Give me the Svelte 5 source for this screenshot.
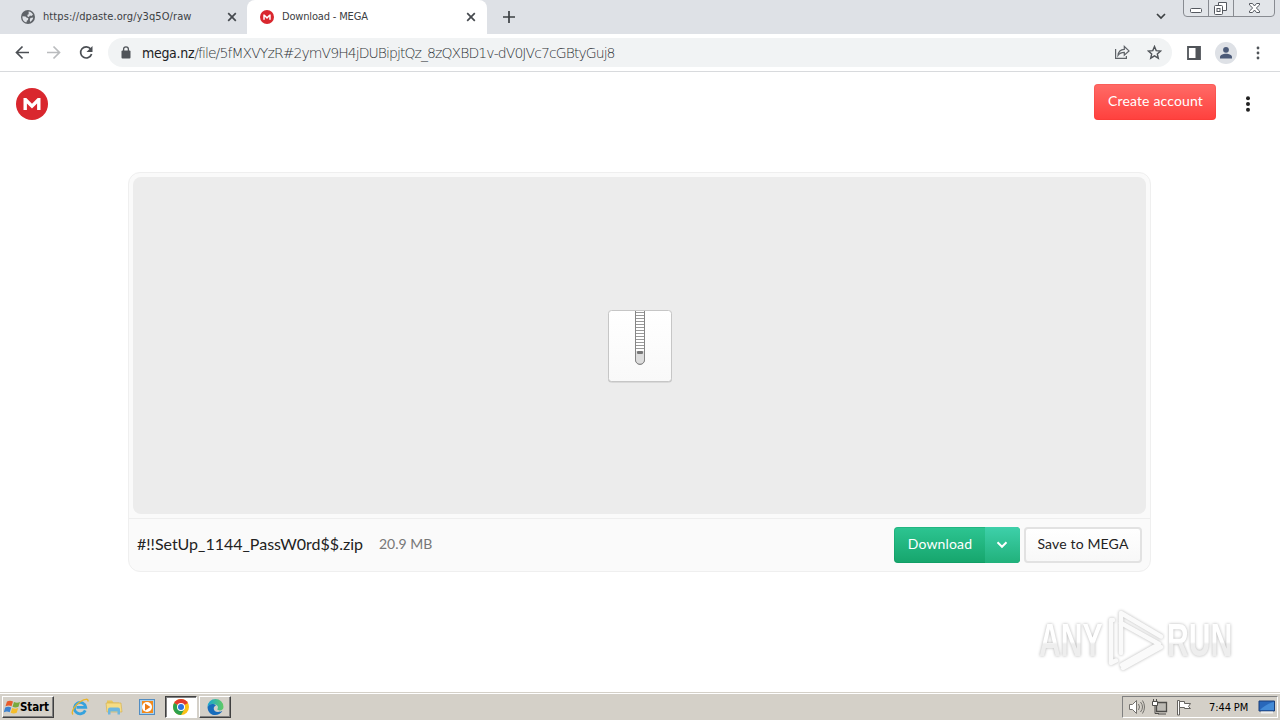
<script lang="ts">
  let url = $state({ host: 'mega.nz', path: '/file/5fMXVYzR#2ymV9H4jDUBipjtQz_8zQXBD1v-dV0JVc7cGBtyGuj8' })
  let file = $state({ name: '#!!SetUp_1144_PassW0rd$$.zip', size: '20.9 MB' })
  const teeth = Array.from({ length: 13 }, (_, i) => 3.5 + i * 3)
</script>

{#snippet mega(size: number)}
  <svg width={size} height={size} viewBox="0 0 32 32">
    <circle cx="16" cy="16" r="16" fill="#d9272e" />
    <path d="M7.500 22V10h2.800l5.700 5.700 5.700-5.700h2.800v12h-3.400v-6.400L16 20.400l-5.100-4.800V22z" fill="#fff" />
  </svg>
{/snippet}

{#snippet cross()}
  <svg class="cross" width="10" height="10" viewBox="0 0 10 10">
    <path d="M1.2 1.2l7.6 7.6M8.8 1.2L1.2 8.8" stroke="#45494e" stroke-width="1.7" />
  </svg>
{/snippet}

<div class="screen">
  <div class="tabs">
    <div class="tab first">
      <svg width="14" height="14" viewBox="0 0 14 14">
        <circle cx="7" cy="7" r="7" fill="#5f6368" />
        <path d="M1.5 6.2l3 .3 1.3 1.3 1.5.3-.3 1.8-1.2.8-.2 1.6C3 12 1 9.4 1.5 6.2zM7.6 1.5c2 .2 3.6 1.4 4.4 3.2L10.3 6 9 5.5 7.8 7l-1.5-.8.2-1.5 1.2-.5zM9.4 8l2.8-.4c-.3 2-1.4 3.4-3 4.3l-.4-2z" fill="#dee1e6" />
      </svg>
      <span class="title t1">https://dpaste.org/y3q5O/raw</span>
      {@render cross()}
    </div>
    <div class="tab active">
      {@render mega(14)}
      <span class="title t2">Download - MEGA</span>
      {@render cross()}
    </div>
    <svg class="plus" width="12" height="12" viewBox="0 0 12 12"><path d="M6 0v12M0 6h12" stroke="#3c4043" stroke-width="1.7" /></svg>
    <svg class="chev" width="10" height="7" viewBox="0 0 10 7"><path d="M1 1l4 4 4-4" fill="none" stroke="#3c4043" stroke-width="1.7" /></svg>
    <div class="window-buttons">
      <svg width="92" height="17" viewBox="0 0 92 17" fill="none">
        <path d="M.5 0v13q0 3.500 3.500 3.500h84q3.500 0 3.500-3.500V0" fill="#e2e5e9" stroke="#888b91" />
        <path d="M25.500 0v16M50.500 0v16" stroke="#888b91" />
        <rect x="7.500" y="8.500" width="11" height="4" rx="1" fill="#fff" stroke="#555960" />
        <path d="M35.500 2.500h8v8h-8z" fill="#fff" stroke="#555960" />
        <rect x="31.500" y="5.500" width="8" height="9" rx="1" fill="#fff" stroke="#555960" />
        <rect x="34" y="8.500" width="3" height="3" stroke="#555960" />
        <path d="M66.500 3.500h3l2 2.500 2-2.500h3v1.500L73.300 8l3.200 3v1.500h-3l-2-2.500-2 2.500h-3V11l3.200-3-3.200-3z" fill="#fff" stroke="#555960" />
      </svg>
    </div>
  </div>

  <div class="toolbar">
    <svg class="nav" width="96" height="16" viewBox="0 0 96 16" fill="none" stroke-width="1.7">
      <path d="M15 7.500H2.500M8.500 1.500l-6 6 6 6" stroke="#4b4f54" />
      <path d="M33 7.500H45.500M39.500 1.500l6 6-6 6" stroke="#babcbe" />
      <path d="M76.700 4A5.600 5.600 0 1 0 77.600 9" stroke="#4b4f54" />
      <path d="M78.500 1v6h-6z" fill="#4b4f54" />
    </svg>
    <div class="address">
      <svg class="lock" width="10" height="13" viewBox="0 0 10 13">
        <rect x=".5" y="4.500" width="9" height="8" rx="1" fill="#505459" />
        <path d="M2.600 5V3.200a2.400 2.400 0 0 1 4.800 0V5" fill="none" stroke="#505459" stroke-width="1.300" />
      </svg>
      <span class="url"><b>{url.host}</b><i>{url.path}</i></span>
      <svg class="share" width="16" height="15" viewBox="0 0 16 15" fill="none" stroke="#5f6368" stroke-width="1.200">
        <path d="M1.600 4v9.400h10.800V11" />
        <path d="M4 10.500c.4-4 2.600-6 6.300-6.100V1.500l4.700 4.400-4.700 4.300V7.400C7.700 7.400 5.600 8.200 4 10.500z" />
      </svg>
      <svg class="star" width="15" height="15" viewBox="0 0 15 15"><path d="M7.500 1.500l1.700 4.100 4.400.4-3.300 2.900 1 4.300-3.800-2.300-3.800 2.300 1-4.300L1.400 6l4.400-.4z" fill="none" stroke="#505459" stroke-width="1.400" /></svg>
    </div>
    <svg class="panel" width="14" height="14" viewBox="0 0 14 14"><path d="M1 1h12v12H1z" fill="none" stroke="#505459" stroke-width="1.800" /><path d="M8.500 1H13v12H8.500z" fill="#505459" /></svg>
    <svg class="avatar" width="22" height="22" viewBox="0 0 22 22">
      <circle cx="11" cy="11" r="11" fill="#dee1e6" />
      <circle cx="11" cy="7.800" r="2.900" fill="#4b5a78" />
      <path d="M5 16.500v-1.300c0-2.200 3-3.400 6-3.400s6 1.200 6 3.400v1.300z" fill="#4b5a78" />
    </svg>
    <svg class="menu" width="4" height="14" viewBox="0 0 4 14" fill="#505459"><circle cx="2" cy="2" r="1.400" /><circle cx="2" cy="7" r="1.400" /><circle cx="2" cy="12" r="1.400" /></svg>
  </div>

  <main>
    <header>
      {@render mega(32)}
      <button class="create">Create account</button>
      <svg width="6" height="16" viewBox="0 0 6 16" fill="#222"><circle cx="3" cy="2.200" r="2" /><circle cx="3" cy="8" r="2" /><circle cx="3" cy="13.800" r="2" /></svg>
    </header>

    <section class="card">
      <div class="viewer">
        <svg width="66" height="76" viewBox="0 0 66 76">
          <defs>
            <linearGradient id="paper" x2="0" y2="1"><stop stop-color="#fff" /><stop offset="1" stop-color="#f9f9f9" /></linearGradient>
          </defs>
          <rect x="1" y="2" width="64" height="71.500" rx="3.500" fill="#aaa" opacity=".55" />
          <rect x="1.500" y="1.500" width="63" height="71" rx="3" fill="url(#paper)" stroke="#c6c6c6" />
          <path d="M28.500 2v48.500a4.500 4.500 0 0 0 9 0V2" fill="#fff" stroke="#858585" />
          {#each teeth as y}
            <path d="M29 {y}h8" stroke="#999" />
          {/each}
          <path d="M29 42h8v8.500a4 4 0 0 1-8 0z" fill="#ddd" />
          <path d="M28.500 42v9a4.500 4.500 0 0 0 9 0v-9" fill="none" stroke="#858585" />
          <rect x="30" y="42" width="6" height="3" rx="1" fill="#777" />
        </svg>
      </div>
      <footer>
        <span class="name">{file.name}</span>
        <span class="size">{file.size}</span>
        <button class="download"><span>Download</span>
          <em><svg width="12" height="8" viewBox="0 0 12 8"><path d="M1.500 1.300L6 5.800l4.500-4.500" fill="none" stroke="#fff" stroke-width="2" /></svg></em>
        </button>
        <button class="save">Save to MEGA</button>
      </footer>
    </section>

    <svg class="watermark" width="220" height="76" viewBox="0 0 220 76">
      <defs>
        <linearGradient id="mark" x2="0" y2="1"><stop offset=".55" stop-color="#fff" /><stop offset=".59" stop-color="#eee" /></linearGradient>
      </defs>
      <g class="mark">
        <text transform="translate(9 54) scale(.64 1)" fill="url(#mark)">ANY</text>
        <text transform="translate(137 54) scale(.64 1)" fill="url(#mark)">RUN</text>
        <g fill="none" stroke="#fafafa" stroke-width="4.500" stroke-linejoin="round" stroke-linecap="round">
          <path d="M91 51V11l40 23.500" />
          <path d="M91 21l38 21-37 21M83 18h-2v43l5-2.500M93 66l38-21" />
        </g>
      </g>
    </svg>
  </main>

  <div class="taskbar">
    <div class="task start">
      <svg width="17" height="16" viewBox="0 0 17 16">
        <path d="M3 2.500Q6 .8 9 2.500L7.500 7.200Q5 5.800 1.500 7.200z" fill="#e85b2a" />
        <path d="M10 3q3 1.500 6 0l-1.500 4.800q-3 1.500-6 0z" fill="#78a93c" />
        <path d="M1.200 8.400Q4.500 7 7.200 8.500l-1.500 4.700Q3 12-.2 13.200z" fill="#3d82cf" />
        <path d="M8.200 9q3 1.500 6 0l-1.500 4.800q-3 1.500-6 0z" fill="#f5bd2b" />
      </svg>
      <span>Start</span>
    </div>
    <svg class="quick ie" width="18" height="18" viewBox="0 0 18 18" fill="none">
      <path d="M14.300 12.400A5.700 5.700 0 1 1 14.700 9.300H5.500" stroke="#36a2dd" stroke-width="2.800" />
      <path d="M2 16.500C-.5 14 4 7 9.500 3.500 14 .7 17.500.5 17 3.500" stroke="#e9b52b" stroke-width="1.400" />
    </svg>
    <svg class="quick folder" width="18" height="18" viewBox="0 0 18 18">
      <path d="M2 2.500h5l1.500 2H14V8H2z" fill="#e7c65d" />
      <path d="M1 5h15l1 9H2z" fill="#f6dc83" stroke="#d1ac4b" stroke-width=".6" />
      <path d="M3 16.500v-5q0-2 2-2h8q2 0 2 2v5h-2.500v-3h-7v3z" fill="#6db6de" />
    </svg>
    <svg class="quick media" width="18" height="18" viewBox="0 0 18 18">
      <rect x="1.500" y="1.500" width="15" height="15" fill="#a9d2ef" stroke="#528dc2" />
      <rect x="4" y="3" width="11" height="12" fill="#f28a1c" />
      <circle cx="9" cy="9" r="5" fill="#fff" /><path d="M7 5.500v7L12.500 9z" fill="#ed7b15" />
    </svg>
    <div class="task app pressed">
      <svg width="16" height="16" viewBox="0 0 16 16">
        <circle cx="8" cy="8" r="8" fill="#fbc116" />
        <path d="M8 8L1.100 4A8 8 0 0 1 14.900 4z" fill="#e33b2e" />
        <path d="M1.100 4A8 8 0 0 0 8 16l3.500-6L8 8z" fill="#2da14d" />
        <circle cx="8" cy="8" r="4" fill="#fff" /><circle cx="8" cy="8" r="3" fill="#2d72df" />
      </svg>
    </div>
    <div class="task app">
      <svg width="17" height="17" viewBox="0 0 17 17">
        <defs><linearGradient id="wave"><stop stop-color="#18a5d5" /><stop offset="1" stop-color="#61cb62" /></linearGradient></defs>
        <path d="M.5 8A8 8 0 0 1 16.500 8c0 3-3 4-5.500 3-1.500-.7.500-1.500-.2-3.500C9.500 4 3 4 .5 8z" fill="url(#wave)" />
        <path d="M.5 8c2-3.500 6-3.800 8.500-1.600C5.500 7.500 6 13 11 13c2 0 3-.4 4.300-.9C12 18 1 18 .5 8z" fill="#176cbc" />
      </svg>
    </div>
    <div class="tray">
      <svg width="17" height="18" viewBox="0 0 17 18" fill="none" stroke="#73716d">
        <path d="M1.500 6.500h3l4-4v13l-4-4h-3z" fill="#fff" /><path d="M10.500 6q2 3 0 6M12.500 4q4 5 0 10M14.500 2.500q4 6.500 0 13" />
      </svg>
      <svg width="18" height="18" viewBox="0 0 18 18" fill="none" stroke="#4e4d4a">
        <path d="M5.500 4.500h10v9h-10z" fill="#bcbab4" stroke-width="1.300" /><path d="M7 16h8M2.500 1v3M5.500 1v3" />
        <path d="M1.500 3.500h5v4h-5z" fill="#fff" /><path d="M4 8v7.500h4" />
      </svg>
      <svg width="18" height="18" viewBox="0 0 18 18" fill="#fff" stroke="#65635f">
        <path d="M2.500 17V2.500h2V17z" /><path d="M4.500 3.500h5v2h6l-2 3 2 2h-6v-1h-5z" />
      </svg>
      <span>7:44 PM</span>
      <svg class="desktop" width="17" height="16" viewBox="0 0 17 16">
        <path d="M1 2h15.500v10H1z" fill="#2867ba" stroke="#1b3f78" /><path d="M2 11Q8 5 16 3v8z" fill="#438bd7" /><path d="M3 13.500h12" stroke="#eee" stroke-width="2" />
      </svg>
    </div>
  </div>
</div>

<style>
  :global(body) { overflow: hidden; }
  * { box-sizing: border-box; }
  svg { display: block; flex: none; }
  .screen {
    width: 1280px; height: 720px;
    display: flex; flex-direction: column;
    background: #fff;
    font-family: "DejaVu Sans Condensed", "DejaVu Sans", sans-serif;
  }
  .tabs { height: 34px; display: flex; background: #dee1e6; }
  .tab { display: flex; align-items: center; height: 34px; }
  .first { width: 247px; padding-left: 21px; border-radius: 0 0 8px 0; }
  .active { width: 240px; padding-left: 13px; background: #fff; border-radius: 8px 8px 0 0; }
  .title { margin-left: 8px; font-size: 11px; line-height: 14px; color: #3c4043; white-space: nowrap; }
  .t1 { width: 184px; letter-spacing: .09px; }
  .t2 { width: 184px; letter-spacing: -.17px; }
  .plus { margin: 11px 0 0 16px; }
  .chev { margin: 13px 17px 0 auto; }
  .window-buttons { width: 97px; }

  .toolbar {
    height: 38px; flex: none;
    display: flex; align-items: center;
    border-bottom: 1px solid #d8dadd;
  }
  .nav { margin-left: 14px; }
  .address {
    width: 1064px; height: 29px; margin-left: -2px; padding-left: 13px;
    display: flex; align-items: center;
    border-radius: 15px; background: #f1f3f4;
  }
  .lock { margin-top: -1px; }
  .url { margin-left: 11px; width: 480px; white-space: nowrap; font-size: 14px; }
  .url b { font-weight: 400; color: #202124; letter-spacing: -.3px; }
  .url i {
    font-style: normal; font-weight: 200; color: #303438;
    font-family: "DejaVu Sans Light", "DejaVu Sans", sans-serif; letter-spacing: -.93px;
  }
  .share { margin-left: auto; }
  .star { margin: 0 10px 0 17px; }
  .panel { margin-left: 15px; }
  .avatar { margin-left: 14px; }
  .menu { margin-left: 19px; }

  main { height: 620px; flex: none; position: relative; font-family: Lato, sans-serif; }
  header { height: 64px; padding: 0 29px 0 16px; display: flex; align-items: center; }
  button { font-family: Lato, sans-serif; font-size: 14px; border: 0; padding: 0; letter-spacing: .15px; }
  .create {
    width: 122px; height: 36px; margin: -4px 29px 0 auto; padding: 0 0 3px 1px;
    color: #fff; border-radius: 4px;
    background: linear-gradient(#ff6b67, #ff403d);
    box-shadow: inset 0 0 0 1px rgba(235, 45, 40, .2);
  }
  .card {
    width: 1023px; height: 400px; margin: 36px 0 0 128px; padding-top: 4px;
    border: 1px solid #efefef; border-radius: 12px;
    background: #fafafa;
  }
  .viewer {
    height: 337px; margin: 0 4px; padding-top: 2px;
    display: flex; align-items: center; justify-content: center;
    background: #ececec; border-radius: 8px;
  }
  .viewer svg { margin-left: 1px; }
  footer {
    height: 54px; margin-top: 4px; padding: 0 8px 2px;
    display: flex; align-items: center;
    border-top: 1px solid #eee;
  }
  .name { padding-bottom: 2px; font-size: 16px; color: #222; }
  .size { margin-left: 16px; padding-bottom: 2px; font-size: 14px; color: #777; }
  .download {
    width: 126px; height: 36px; margin-left: auto; overflow: hidden;
    display: flex; align-items: center;
    color: #fff; border-radius: 4px;
    background: linear-gradient(#2dc592, #16a56c);
    box-shadow: inset 0 0 0 1px rgba(0, 140, 80, .25);
  }
  .download span { width: 91px; padding: 0 0 2px 1px; }
  .download em {
    width: 35px; height: 36px; display: grid; place-items: center;
    background: linear-gradient(#3ed0aa, #21b17b);
  }
  .download svg { margin-right: 2px; }
  .save {
    width: 118px; height: 36px; margin-left: 4px; padding-bottom: 2px;
    color: #222; border: 2px solid #e2e2e2; border-radius: 4px;
    background: linear-gradient(#fff, #f8f8f8);
  }
  .watermark { position: absolute; left: 1030px; top: 530px; }
  .mark { filter: drop-shadow(0 0 1.5px #b4b4b4); }
  .mark text { font: 700 47px "Liberation Sans", sans-serif; }

  .taskbar {
    height: 28px; flex: none; padding: 3px 2px 2px;
    display: flex; align-items: center;
    background: #d4d0c8; border-top: 1px solid #d4d0c8;
    box-shadow: inset 0 1px #fff;
  }
  .task {
    height: 22px; display: flex; align-items: center;
    border: 1px solid; border-color: #fff #404040 #404040 #fff;
    box-shadow: inset -1px -1px #808080;
  }
  .start { width: 52px; padding-left: 1px; font-size: 11.5px; font-weight: 700; color: #000; }
  .start span { letter-spacing: -.1px; margin-left: -1px; }
  .ie { margin-left: 17px; }
  .folder { margin-left: 16px; }
  .media { margin-left: 15px; }
  .app { width: 32px; justify-content: center; margin-left: 2px; }
  .app.pressed { margin-left: 9px; background: #fff; border-color: #404040 #fff #fff #404040; box-shadow: inset 1px 1px #808080; }
  .tray {
    width: 156px; height: 22px; margin-left: auto; padding-left: 5px;
    display: flex; align-items: center; gap: 6px;
    border: 1px solid; border-color: #808080 #fff #fff #808080;
  }
  .tray span { margin-left: 10px; width: 43px; font-size: 11px; letter-spacing: -.1px; white-space: nowrap; color: #000; }
</style>
